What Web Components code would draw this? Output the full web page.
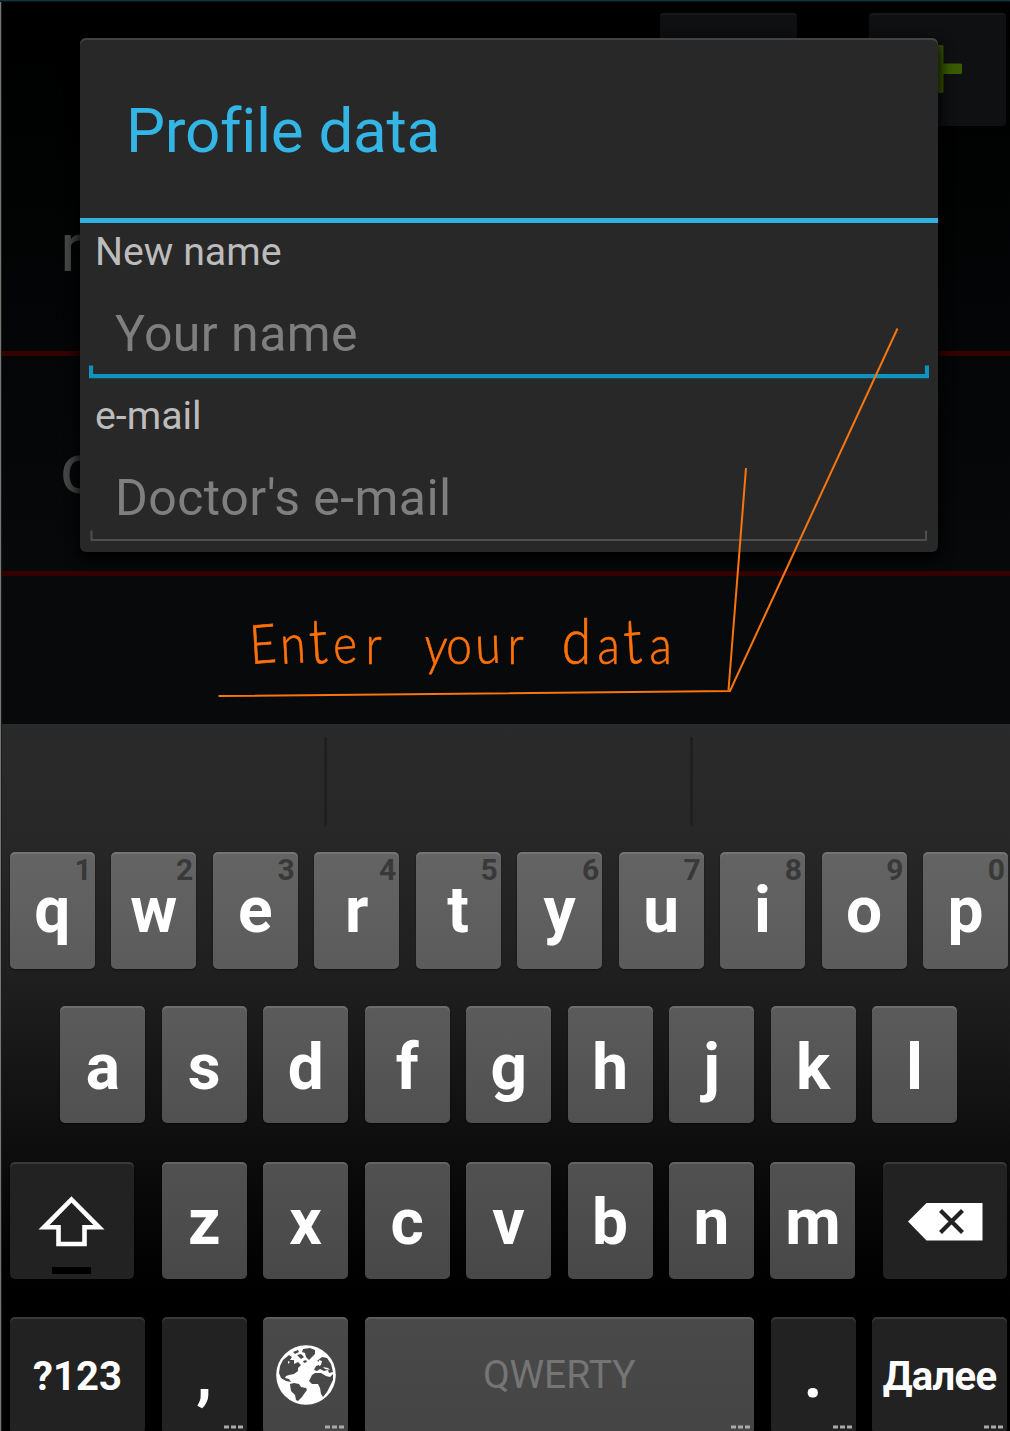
<!DOCTYPE html>
<html lang="en">
<head>
<meta charset="utf-8">
<title>Profile data</title>
<style>
html,body{margin:0;height:1431px;overflow:hidden;background:#000}
body{font-family:Roboto,"Liberation Sans",sans-serif}
</style>
</head>
<body>
<phone-screen>
  <list-backdrop slot="back"></list-backdrop>
  <profile-dialog slot="dialog" heading="Profile data">
    <form-field label="New name" hint="Your name" active></form-field>
    <form-field label="e-mail" hint="Doctor's e-mail"></form-field>
  </profile-dialog>
  <soft-keyboard slot="keyboard"></soft-keyboard>
  <callout-note slot="note"></callout-note>
</phone-screen>
<script>
const define = (name, html) => customElements.define(name, class extends HTMLElement {
  connectedCallback() {
    if (this.shadowRoot) return;
    this.attachShadow({mode: 'open'}).innerHTML = typeof html === 'function' ? html(this) : html;
  }
});

define('phone-screen', `<style>
:host{display:grid;grid-template-rows:724px 707px;grid-template-columns:1010px;width:1010px;height:1431px;position:relative;overflow:hidden;background:#000}
.top{display:grid;grid-template:724px/1010px}
.top ::slotted(*){grid-area:1/1}
.edge{position:absolute;left:0;top:0;width:1px;height:1431px;background:#747672;border-right:1px solid #1c1d1d}
.bar{position:absolute;left:0;top:0;width:1010px;height:1px;background:#10363f;border-bottom:1px solid #071518}
</style>
<div class="top"><slot name="back"></slot><slot name="dialog"></slot></div>
<slot name="keyboard"></slot><div class="edge"></div><div class="bar"></div><slot name="note"></slot>`);

define('list-backdrop', `<style>
:host{display:flex;flex-direction:column;background:linear-gradient(#000 0,#010202 180px,#040506 350px,#08090b 600px,#08090b)}
header{display:flex;justify-content:flex-end;gap:72px;padding:13px 4px 0 0;height:113px}
.btn{width:137px;height:113px;border-radius:4px;background:#0e1012;box-shadow:inset 0 2px #171817;display:block}
.row{box-sizing:border-box;border-bottom:5px solid #350000;font-size:69px;line-height:80px;color:#454646}
.a{height:230px;padding:82px 0 0 60px}.b{height:220px;padding:73px 0 0 60px;font-size:71px}
</style>
<header><span class="btn"></span><svg class="btn" viewBox="0 0 137 113"><path d="M64 33.500a1.500 1.500 0 0 1 1.500-1.500h7.500a1.500 1.500 0 0 1 1.500 1.500V50.500H91.500a1.500 1.500 0 0 1 1.500 1.500v7.500a1.500 1.500 0 0 1-1.500 1.500H74.500V78.500a1.500 1.500 0 0 1-1.500 1.500H64Z" fill="#3b5b03"/></svg></header>
<div class="row a">r</div><div class="row b">c</div>`);

define('profile-dialog', el => `<style>
:host{display:flex;flex-direction:column;box-sizing:border-box;width:858px;height:514px;margin:38px 0 0 80px;border-radius:6px;background:#282828;box-shadow:inset 0 2px #434343,0 6px 14px 2px #000;z-index:1}
h1{margin:0;box-sizing:border-box;flex:none;height:185px;padding:56px 0 0 46px;border-bottom:5px solid #33b0df;font-weight:400;font-size:62px;line-height:74px;letter-spacing:-.3px;color:#33b5e5;white-space:nowrap}
</style><h1>${el.getAttribute('heading')}</h1><slot></slot>`);

define('form-field', el => `<style>
:host{display:block;box-sizing:border-box;flex:none;height:164.500px;padding:5.500px 9px 0}
label{display:block;height:47px;padding-left:6px;font-size:39.300px;line-height:47px;color:#bcbcbc}
.input{box-sizing:border-box;height:103.500px;padding:29px 0 0 26px;font-size:50px;line-height:59px;color:#7f7f7f;letter-spacing:.45px;position:relative}
svg{position:absolute;left:0;bottom:0}
</style><label>${el.getAttribute('label')}</label><div class="input">${el.getAttribute('hint')}
<svg width="840" height="14" viewBox="0 0 840 14" fill="none">${el.hasAttribute('active')
  ? '<path d="M2 .5V11.2H838V.5" stroke="#0f93bf" stroke-width="4.2"/>'
  : '<path d="M2.5 .5V10H837V.5" stroke="#4e4e4e" stroke-width="2"/>'}</svg></div>`);

define('key-cap', el => `<style>
:host{display:block;position:relative;box-sizing:border-box;flex:none;width:var(--w,85px);height:117px;border-radius:5px;background:var(--face);box-shadow:inset 0 2px #ffffff1c,0 1px 2px #0007;text-align:center;color:#fff;font-weight:700;font-size:64px;line-height:117px;white-space:nowrap}
:host([dark]){background:#222}
:host([small]){font-size:40px}
:host([space]){font-size:39px;font-weight:400;color:#757575}
.main{display:block;padding-top:var(--drop,0)}
.num{position:absolute;top:0;right:3px;font-size:30px;line-height:35px;color:#393939}
.more{position:absolute;right:4px;top:108px}
</style><span class="main"><slot></slot></span>${el.getAttribute('num') ? `<span class="num">${el.getAttribute('num')}</span>` : ''}${el.hasAttribute('more') ? '<svg class="more" width="19" height="4"><path d="M0 2h19" stroke="#aaa" stroke-width="3" stroke-dasharray="5 2"/></svg>' : ''}`);

const shift = `<svg width="124" height="117" viewBox="0 0 124 117"><path d="M61.500 37.500L89 65.300H74.500V82H48.500V65.300H34Z" fill="none" stroke="#fff" stroke-width="4.600"/><path d="M42 105h39v7h-39z" fill="#000"/></svg>`;
const del = `<svg width="124" height="117" viewBox="0 0 124 117"><path d="M25 59.500L43.500 41H99.500V78.500H43.500Z" fill="#fff"/><path d="M57.500 48.500l22 22m0-22l-22 22" stroke="#222" stroke-width="4.200"/></svg>`;
const globe = `<svg width="85" height="117" viewBox="-43 -58 85 117"><circle r="29.800" fill="#fff"/>
<g fill="#484848">
<path d="M-27 -2L-26 -9-23 -15-17 -20-14 -18-16 -15-12 -15-12 -11-8 -13-5 -10-8 -7-8 -4-12 -1-17 0-20 1-21 3-17 4-15 7-20 6-25 3Z"/>
<path d="M-16 9L-12 8-7 9-5 12 0 13 1 15-2 19-4 22-8 26-10 25-11 20-15 16Z"/>
<path d="M-3 -26L4 -27 9 -25 9 -21 6 -18 3 -15 0 -18-1 -22-4 -23Z"/>
<path d="M-13 -23l5-2 1 2-4 2zM-9 -20l4-1 3 3-3 2zM-3 -14l3-1 1 2-3 1z"/>
<path d="M6 0L9 -2 15 -2 20 1 24 2 27 -1 27 5 24 11 21 17 17 22 15 19 14 13 12 9 6 9 3 6Z"/>
<path d="M8 -5L10 -9 13 -10 14 -13 11 -14 16 -18 21 -17 25 -11 27 -3 23 -2 22 -5 18 -4 14 -6 11 -4Z"/></g>
<path fill="#fff" d="M13 -15l3 1-1 4-2 1zM17 -8l5 1 2 2-5-1zM-18 -14l2 1-2 2z"/></svg>`;

define('soft-keyboard', () => {
  const keys = (s, nums) => [...s].map((c, i) => `<key-cap${nums ? ` num="${nums[i]}"` : ''}>${c}</key-cap>`).join('');
  return `<style>
:host{display:flex;flex-direction:column;overflow:hidden;background:linear-gradient(#2a2a2a 0,#272727 115px,#1e1e1e 266px,#0e0e0e 416px,#020202 540px,#000 580px)}
.strip{display:flex;flex:none;height:89px;padding-top:13px;margin-bottom:26px}
.strip i{box-sizing:border-box;border-right:3px solid #1f1f1f}
.row{display:flex;gap:16.480px;height:117px;flex:none;padding-left:9.800px}
.r1{--face:linear-gradient(#646464,#5b5b5b);margin-bottom:37px}
.r2{--face:linear-gradient(#5b5b5b,#505050);padding-left:60.300px;margin-bottom:39px;--drop:3px}
.r3{--face:linear-gradient(#515151,#484848);margin-bottom:38px;--drop:2px}
.r4{--face:linear-gradient(#494949,#454545)}
svg{display:block}
.wide{--w:124.500px;--drop:0}
</style>
<div class="strip"><i style="width:327px"></i><i style="width:366px"></i></div>
<div class="row r1">${keys('qwertyuiop', '1234567890')}</div>
<div class="row r2">${keys('asdfghjkl')}</div>
<div class="row r3"><key-cap dark class="wide" style="margin-right:10.900px">${shift}</key-cap>${keys('zxcvbnm')}<key-cap dark class="wide" style="margin-left:10.600px">${del}</key-cap></div>
<div class="row r4"><key-cap dark small style="--w:135.400px;--drop:1px">?123</key-cap><key-cap dark more>,</key-cap><key-cap more>${globe}</key-cap><key-cap space more style="--w:389.500px">QWERTY</key-cap><key-cap dark more>.</key-cap><key-cap dark small more style="--w:135px;--drop:1px;letter-spacing:-.7px">Далее</key-cap></div>`;
});

define('callout-note', `<style>
:host{position:absolute;inset:0;z-index:2;pointer-events:none}
text{font-family:Lato,sans-serif;font-weight:300;font-size:54px;fill:#ff7109;stroke:#ff7109;stroke-width:.7px}
.tall{font-size:63px}
</style><svg width="1010" height="1431" viewBox="0 0 1010 1431">
<path d="M218.500 696L730 691L897.500 328.500M728.500 690L746 468" fill="none" stroke="#f8750f" stroke-width="2"/>
<text transform="translate(0 664) scale(.85 1)" x="295 331 365 393 430 470 498 525 560 597 630 661 703 735 764" rotate="-4 -4 -4 -4 0 0 4 0 -3 0 0 0 0 -4 0">En<tspan class="tall">t</tspan>er your <tspan class="tall">d</tspan>a<tspan class="tall">t</tspan>a</text></svg>`);
</script>
</body>
</html>
